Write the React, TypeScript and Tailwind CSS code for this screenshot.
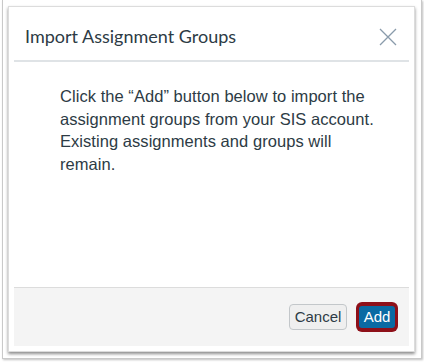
export default function App() {
  return (
    <div className="w-[424px] h-[362px] bg-white overflow-hidden">
      {/* window frame */}
      <div className="ml-[2px] w-[420px] h-[359px] border-x border-b border-[#c9c9c9] shadow-[1px_1px_2px_rgba(0,0,0,0.25)] pl-[5px] pt-[6px]">
        {/* dialog */}
        <div className="w-[407px] h-[346px] bg-white border border-[#dcdcdc] shadow-[0_2px_3px_rgba(0,0,0,0.45)] p-[5px] flex flex-col">
          <div className="h-[50px] border-b-2 border-[#dfe3e6] flex items-center justify-between pl-[11px] pr-[12px] shrink-0">
            <h2 className="text-[18px] text-[#2d3b45] font-['Lato',sans-serif]">
              Import Assignment Groups
            </h2>
            <svg width="18" height="18" viewBox="0 0 18 18" className="mt-[1px]">
              <path d="M1 1L17 17M17 1L1 17" stroke="#8a9bab" strokeWidth="1.3" fill="none" />
            </svg>
          </div>

          <div className="flex-1 pl-[46px] pr-[24px] pt-[23px]">
            <p className="text-[16.5px] leading-[22.5px] tracking-[0.05px] text-[#2d3b45] font-['Liberation_Sans',Arial,sans-serif]">
              Click the “Add” button below to import the assignment groups from your SIS account. Existing
              assignments and groups will remain.
            </p>
          </div>

          <div className="h-[59px] shrink-0 bg-[#f4f4f4] border-t border-[#dcdcdc] flex items-center justify-end gap-[9px] pr-[11px] font-['Liberation_Sans',Arial,sans-serif]">
            <button className="h-[26px] w-[58px] rounded-[4px] border border-[#c3c7ca] bg-[#efefef] text-[15px] text-[#2d3b45]">
              Cancel
            </button>
            <div className="rounded-[6px] bg-[#8e1019] p-[3px]">
              <button className="h-[22px] w-[36px] rounded-[3px] bg-[#0a6aa3] text-[15px] text-white">
                Add
              </button>
            </div>
          </div>
        </div>
      </div>
    </div>
  );
}
